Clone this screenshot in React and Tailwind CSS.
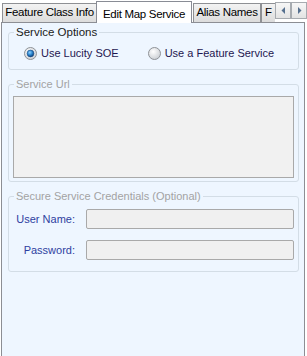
import React from 'react';

function Radio({ checked }) {
    return (
        <svg width="13" height="13" viewBox="0 0 13 13" className="shrink-0">
            <defs>
                <radialGradient id="rb-bg" cx="40%" cy="35%" r="70%">
                    <stop offset="0%" stopColor="#ffffff" />
                    <stop offset="100%" stopColor="#c9cdd2" />
                </radialGradient>
                <radialGradient id="rb-dot" cx="40%" cy="35%" r="65%">
                    <stop offset="0%" stopColor="#8fd0ff" />
                    <stop offset="55%" stopColor="#2a86cf" />
                    <stop offset="100%" stopColor="#0d3f7a" />
                </radialGradient>
            </defs>
            <circle cx="6.5" cy="6.5" r="6" fill="url(#rb-bg)" stroke="#8e9297" strokeWidth="1" />
            {checked && <circle cx="6.5" cy="6.5" r="3.4" fill="url(#rb-dot)" stroke="#1b4e86" strokeWidth="0.6" />}
        </svg>
    );
}

function Tab({ label, selected, className }) {
    if (selected) {
        return (
            <div className={`relative z-10 -mb-px flex h-[22px] items-start justify-center border border-b-0 border-[#898c95] bg-white pt-[4px] text-[11.5px] tracking-[-0.3px] text-black ${className}`}>
                {label}
            </div>
        );
    }
    return (
        <div className={`flex h-[19px] items-center justify-center overflow-hidden border border-b-0 border-[#8e9094] bg-gradient-to-b from-[#f3f3f3] to-[#dcdcdc] text-[11.5px] tracking-[-0.3px] text-black ${className}`}>
            {label}
        </div>
    );
}

function ScrollBtn({ dir }) {
    return (
        <div className="flex h-[17px] w-[16px] items-center justify-center border border-[#a7abb0] bg-gradient-to-b from-[#f7f7f7] to-[#e3e3e3]">
            <svg width="5" height="7" viewBox="0 0 5 7">
                {dir === 'left'
                    ? <polygon points="4,0 4,7 0.5,3.5" fill="#56708f" />
                    : <polygon points="1,0 1,7 4.5,3.5" fill="#56708f" />}
            </svg>
        </div>
    );
}

export default function App() {
    return (
        <div className="h-[356px] w-[307px] overflow-hidden bg-white font-['Liberation_Sans',Arial,sans-serif]">
            {/* tab strip */}
            <div className="relative flex h-[22px] items-end pl-[2px]">
                <Tab label="Feature Class Info" className="w-[95px]" />
                <Tab label="Edit Map Service" selected className="-ml-px w-[96px]" />
                <Tab label="Alias Names" className="ml-px w-[68px]" />
                <Tab label="F" className="w-[14px] justify-start border-r-0 pl-[3px]" />
                <div className="mb-[3px] flex self-end">
                    <ScrollBtn dir="left" />
                    <ScrollBtn dir="right" />
                </div>
            </div>

            {/* page body */}
            <div className="ml-px h-[334px] w-[304px] border border-b-0 border-[#8c8e94] bg-[#eef6ff] pl-[6px] pt-[3px] text-[11px]">
                <fieldset className="h-[44px] w-[291px] rounded-[3px] border border-[#d3dde6] px-0">
                    <legend className="ml-[5px] px-[2px] text-[11.5px] leading-[13px] text-[#1a1a1a]">Service Options</legend>
                    <div className="flex items-center pt-[6px] text-[11px]">
                        <div className="ml-[15px] flex items-center gap-[4px] text-[#1e1650]">
                            <Radio checked />
                            <span>Use Lucity SOE</span>
                        </div>
                        <div className="ml-[29px] flex items-center gap-[4px] text-[#1e1650]">
                            <Radio />
                            <span>Use a Feature Service</span>
                        </div>
                    </div>
                </fieldset>

                <fieldset className="mt-[8px] h-[104px] w-[291px] rounded-[3px] border border-[#d3dde6] px-0">
                    <legend className="ml-[5px] px-[2px] leading-[13px] text-[#a3a3a3]">Service Url</legend>
                    <div className="ml-[4px] mt-[5px] h-[82px] w-[281px] border border-[#a9a9a9] bg-[#f1f1f1]" />
                </fieldset>

                <fieldset className="mt-[8px] h-[82px] w-[291px] rounded-[3px] border border-[#d3dde6] px-0">
                    <legend className="ml-[5px] px-[2px] leading-[13px] text-[#a3a3a3]">Secure Service Credentials (Optional)</legend>
                    <div className="flex flex-col gap-[11px] pt-[6px]">
                        <div className="flex items-center">
                            <span className="w-[66px] text-right text-[#2e3f9f]">User Name:</span>
                            <div className="ml-[11px] h-[20px] w-[208px] rounded-[2px] border border-[#a9a9a9] bg-[#f0f0f0]" />
                        </div>
                        <div className="flex items-center">
                            <span className="w-[66px] text-right text-[#2e3f9f]">Password:</span>
                            <div className="ml-[11px] h-[20px] w-[208px] rounded-[2px] border border-[#a9a9a9] bg-[#f0f0f0]" />
                        </div>
                    </div>
                </fieldset>
            </div>
        </div>
    );
}
